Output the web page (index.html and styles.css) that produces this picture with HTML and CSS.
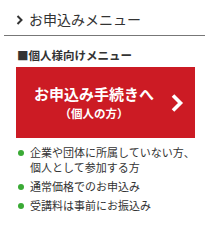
FILE: index.html
```html
<!DOCTYPE html>
<html lang="ja">
<head>
    <meta charset="UTF-8">
    <meta name="viewport" content="width=device-width, initial-scale=1.0">
    <title>お申込みメニュー</title>
    <link rel="stylesheet" href="styles.css">
</head>
<body>
    <div class="menu">
        <h2 class="menu-title">
            <svg class="title-arrow" width="7" height="10" viewBox="0 0 7 10"><path d="M1.5 1 L5.5 5 L1.5 9" fill="none" stroke="#333" stroke-width="2"/></svg>
            お申込みメニュー
        </h2>
        <div class="section">
            <h3 class="section-title">■個人様向けメニュー</h3>
            <a class="apply-btn" href="#">
                <span class="btn-text">
                    <span class="btn-main">お申込み手続きへ</span>
                    <span class="btn-sub">（個人の方）</span>
                </span>
                <svg class="btn-arrow" width="14" height="20" viewBox="0 0 14 20"><path d="M3 2.5 L10.5 10 L3 17.5" fill="none" stroke="#fff" stroke-width="3.6"/></svg>
            </a>
            <ul class="notes">
                <li>企業や団体に所属していない方、個人として参加する方</li>
                <li>通常価格でのお申込み</li>
                <li>受講料は事前にお振込み</li>
            </ul>
        </div>
    </div>
</body>
</html>
```

FILE: styles.css
```css
body {
    margin: 0;
    font-family: "Noto Sans CJK JP", "Noto Sans", sans-serif;
    color: #333;
    background-color: #fff;
}
.menu {
    padding-left: 4px;
}
.menu-title {
    display: flex;
    align-items: center;
    gap: 6px;
    margin: 0;
    padding: 11px 0 7px 12px;
    font-size: 14px;
    font-weight: normal;
    line-height: 17px;
    border-bottom: 1px solid #777;
}
.section {
    padding: 0 10px 0 12px;
}
.section-title {
    margin: 12px 0 5px 1px;
    font-size: 11.5px;
    line-height: 14px;
    font-weight: bold;
}
.apply-btn {
    display: flex;
    align-items: center;
    height: 71px;
    background-color: #cc1b24;
    color: #fff;
    text-decoration: none;
}
.btn-text {
    flex: 1;
    display: flex;
    flex-direction: column;
    align-items: center;
    padding-left: 2px;
    font-weight: bold;
}
.btn-main {
    font-size: 15px;
    line-height: 20px;
}
.btn-sub {
    font-size: 11.5px;
    line-height: 18px;
}
.btn-arrow {
    margin-right: 11px;
}
.notes {
    margin: 7px 0 0;
    padding: 0;
    list-style: none;
    font-size: 11px;
    line-height: 15px;
}
.notes li {
    position: relative;
    padding-left: 14px;
    margin-bottom: 4px;
}
.notes li::before {
    content: "";
    position: absolute;
    left: 2px;
    top: 5px;
    width: 6px;
    height: 6px;
    border-radius: 50%;
    background-color: #3aaa35;
}
```
